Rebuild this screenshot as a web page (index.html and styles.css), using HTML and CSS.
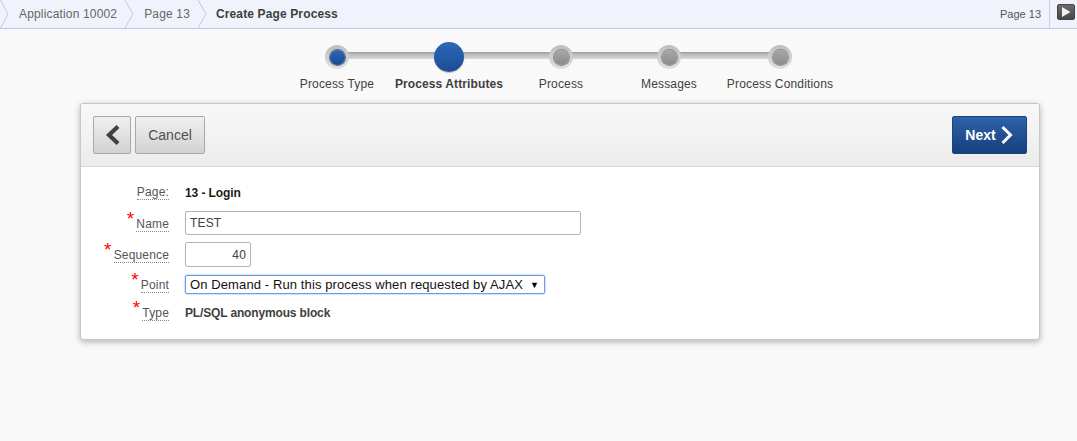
FILE: index.html
```html
<!DOCTYPE html>
<html lang="en">
<head>
<meta charset="utf-8">
<title>Create Page Process</title>
<link rel="stylesheet" href="styles.css">
</head>
<body>
<header class="topbar">
  <nav class="crumbs">
    <svg class="chev chev-first" width="9" height="28" viewBox="0 0 9 28"><path d="M0.5 0 L8 14 L0.5 28" fill="none" stroke="#bccbe0"/></svg>
    <a class="crumb">Application 10002</a>
    <svg class="chev" width="10" height="28" viewBox="0 0 10 28"><path d="M1 0 L9 14 L1 28" fill="none" stroke="#bccbe0"/></svg>
    <a class="crumb">Page 13</a>
    <svg class="chev" width="10" height="28" viewBox="0 0 10 28"><path d="M1 0 L9 14 L1 28" fill="none" stroke="#bccbe0"/></svg>
    <span class="crumb crumb-current">Create Page Process</span>
  </nav>
  <div class="top-right">
    <span class="page-label">Page 13</span>
    <div class="run-cell">
      <button class="run-btn" type="button" aria-label="Run"><svg width="10" height="10" viewBox="0 0 10 10"><path d="M1 0 L9.5 5 L1 10 Z" fill="#f0f0f0"/></svg></button>
    </div>
  </div>
</header>

<ol class="wizard">
  <li class="step done"><span class="node"><span class="dot"></span></span><span class="step-label">Process Type</span></li>
  <li class="step active"><span class="node"><span class="dot"></span></span><span class="step-label">Process Attributes</span></li>
  <li class="step"><span class="node"><span class="dot"></span></span><span class="step-label">Process</span></li>
  <li class="step"><span class="node"><span class="dot"></span></span><span class="step-label">Messages</span></li>
  <li class="step"><span class="node"><span class="dot"></span></span><span class="step-label">Process Conditions</span></li>
</ol>

<main class="panel">
  <div class="toolbar">
    <div class="toolbar-left">
      <button class="btn btn-icon" type="button" aria-label="Previous"><svg width="15" height="22" viewBox="0 0 15 22"><path d="M13 2.5 L4 11 L13 19.5" fill="none" stroke="#404040" stroke-width="4.2"/></svg></button>
      <button class="btn btn-cancel" type="button">Cancel</button>
    </div>
    <button class="btn btn-next" type="button">Next<svg width="14" height="20" viewBox="0 0 14 20"><path d="M2.5 2 L10.5 10 L2.5 18" fill="none" stroke="#ffffff" stroke-width="3"/></svg></button>
  </div>
  <form class="form">
    <div class="row row-page">
      <div class="label-cell"><span class="label">Page:</span></div>
      <strong class="value-page">13 - Login</strong>
    </div>
    <div class="row row-name">
      <div class="label-cell"><span class="req">*</span><span class="label">Name</span></div>
      <input class="field field-name" type="text" value="TEST">
    </div>
    <div class="row row-seq">
      <div class="label-cell"><span class="req">*</span><span class="label">Sequence</span></div>
      <input class="field field-seq" type="text" value="40">
    </div>
    <div class="row row-point">
      <div class="label-cell"><span class="req">*</span><span class="label">Point</span></div>
      <div class="select"><span>On Demand - Run this process when requested by AJAX</span><span class="select-arrow">▼</span></div>
    </div>
    <div class="row row-type">
      <div class="label-cell"><span class="req">*</span><span class="label">Type</span></div>
      <strong class="value-type">PL/SQL anonymous block</strong>
    </div>
  </form>
</main>
</body>
</html>
```
FILE: styles.css
```css
* { box-sizing: border-box; }
html, body { margin: 0; height: 100%; }
body {
  background: #f9f9f9;
  font-family: "Liberation Sans", Arial, sans-serif;
  font-size: 12px;
  letter-spacing: .16px;
  color: #404040;
  overflow: hidden;
}

/* Top bar */
.topbar {
  display: flex;
  justify-content: space-between;
  height: 29px;
  background: #f0f3fb;
  border-bottom: 1px solid #b9c8dc;
}
.crumbs { display: flex; align-items: center; height: 28px; }
.chev { display: block; flex: none; }
.chev-first { margin-right: 10px; }
.crumb { color: #666; padding: 0 7px 0 0; line-height: 28px; }
.chev + .crumb { padding-left: 10px; }
.chev-first + .crumb { padding-left: 0; }
.chev + .crumb-current { padding-left: 9px; color: #404040; font-weight: bold; letter-spacing: .13px; }
.top-right { display: flex; align-items: center; height: 28px; }
.page-label { font-size: 11px; letter-spacing: 0; color: #555; margin-right: 8px; }
.run-cell {
  width: 28px;
  height: 28px;
  padding: 4px 2px 0 7px;
  border-left: 1px solid #c9d3e2;
}
.run-btn {
  width: 18px;
  height: 16px;
  padding: 0;
  border: 1px solid #444;
  border-radius: 2px;
  background: linear-gradient(#6a6a6a, #484848);
  display: flex;
  align-items: center;
  justify-content: center;
}

/* Wizard */
.wizard {
  list-style: none;
  margin: 13px 0 0 281px;
  padding: 0;
  display: grid;
  grid-template-columns: 112px 112px 112px 104px 118px;
  width: 558px;
  position: relative;
}
.wizard::before {
  content: "";
  position: absolute;
  left: 56px;
  width: 443px;
  top: 10px;
  height: 7px;
  background: linear-gradient(#9a9a9a, #b8b8b8 30%, #d8d8d8);
}
.step {
  display: flex;
  flex-direction: column;
  align-items: center;
  position: relative;
}
.node {
  width: 24px;
  height: 24px;
  margin: 3px 0;
  border-radius: 50%;
  background: linear-gradient(#bdbdbd, #e0e0e0);
  display: flex;
  align-items: center;
  justify-content: center;
}
.dot {
  width: 15px;
  height: 15px;
  border-radius: 50%;
  background: linear-gradient(#a8a8a8, #8a8a8a);
  box-shadow: 0 0 0 1px #8c8c8c;
}
.done .dot {
  background: linear-gradient(#2f66b4, #164a92);
  box-shadow: 0 0 0 1px #5c6a80;
}
.active .node {
  width: 30px;
  height: 30px;
  margin: 0;
  background: linear-gradient(#2e68b8, #1a4c94);
  box-shadow: 0 1px 1px rgba(0, 0, 0, .25);
}
.active .dot { display: none; }
.step-label {
  margin-top: 5px;
  line-height: 14px;
  color: #404040;
  white-space: nowrap;
}
.active .step-label { font-weight: bold; letter-spacing: .1px; }

/* Panel */
.panel {
  margin: 12px 37px 0 80px;
  height: 237px;
  background: #fff;
  border: 1px solid #c8c8c8;
  border-radius: 3px;
  box-shadow: 0 2px 6px rgba(0, 0, 0, .28);
}
.toolbar {
  height: 63px;
  padding: 12px 12px 0 12px;
  display: flex;
  justify-content: space-between;
  align-items: flex-start;
  background: linear-gradient(#f8f8f8, #ececec);
  border-bottom: 1px solid #d4d4d4;
  border-radius: 3px 3px 0 0;
}
.toolbar-left { display: flex; gap: 4px; }
.btn {
  height: 38px;
  margin: 0;
  padding: 0;
  border: 1px solid #a8a8a8;
  border-radius: 2px;
  background: linear-gradient(#f0f0f0, #d2d2d2);
  font-family: inherit;
  letter-spacing: 0;
  display: flex;
  align-items: center;
  justify-content: center;
}
.btn-icon { width: 38px; }
.btn-cancel { width: 70px; font-size: 14px; color: #505050; }
.btn-next {
  width: 75px;
  gap: 4px;
  font-size: 14px;
  font-weight: bold;
  color: #fff;
  border-color: #1b447e;
  background: linear-gradient(#2f62a8, #153f80);
}

/* Form */
.form { padding-top: 17px; }
.row { display: flex; align-items: center; }
.label-cell {
  width: 88px;
  margin-right: 16px;
  padding-top: 2px;
  flex: none;
  text-align: right;
}
.row-page .label-cell { padding-top: 0; }
.label {
  color: #555;
  line-height: 14px;
  display: inline-block;
  border-bottom: 1px dotted #888;
}
.req {
  color: #f00;
  font-size: 19px;
  line-height: 10px;
  position: relative;
  top: -3px;
  margin-right: 2px;
}
.row-page { height: 17px; }
.row-name { height: 24px; margin-top: 10px; }
.row-seq { height: 25px; margin-top: 7px; }
.row-point { height: 19px; margin-top: 8px; }
.row-type { height: 17px; margin-top: 10px; }
.value-page { color: #1a1a1a; letter-spacing: -.1px; }
.value-type { color: #404040; letter-spacing: -.15px; }
.field {
  height: 100%;
  margin: 0;
  padding: 0 4px;
  border: 1px solid #b4b4b4;
  border-radius: 2px;
  font-family: inherit;
  font-size: 12px;
  letter-spacing: .16px;
  color: #404040;
  background: #fff;
  outline: 0;
}
.field-name { width: 396px; }
.field-seq { width: 66px; text-align: right; }
.select {
  width: 360px;
  height: 19px;
  padding: 0 5px 0 4px;
  border: 1px solid #6d9ae4;
  border-radius: 2px;
  box-shadow: 0 0 2px #6d9ae4;
  display: flex;
  align-items: center;
  justify-content: space-between;
  font-size: 13px;
  letter-spacing: .11px;
  color: #111;
  white-space: nowrap;
}
.select-arrow { font-size: 9px; letter-spacing: 0; color: #000; }
```
